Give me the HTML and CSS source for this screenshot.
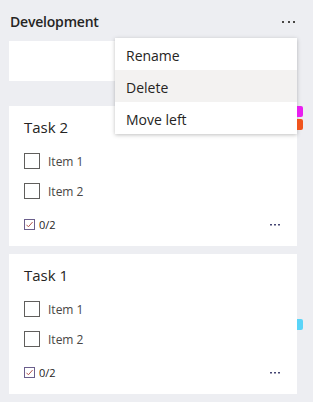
FILE: index.html
```html
<!DOCTYPE html>
<html lang="en">
<head>
    <meta charset="UTF-8">
    <meta name="viewport" content="width=device-width, initial-scale=1.0">
    <title>Board</title>
    <link rel="stylesheet" href="styles.css">
</head>
<body>

    <div class="column">
        <div class="column-header">
            <h2 class="column-title">Development</h2>
            <svg class="more" width="14" height="3" viewBox="0 0 14 3"><rect x="0" y="0" width="2" height="2" fill="#484644"/><rect x="6" y="0" width="2" height="2" fill="#484644"/><rect x="11" y="0" width="2" height="2" fill="#484644"/></svg>
        </div>

        <div class="card card-empty"></div>

        <div class="card task">
            <div class="task-title">Task 2</div>
            <div class="check-row"><span class="box"></span>Item 1</div>
            <div class="check-row"><span class="box"></span>Item 2</div>
            <div class="task-footer">
                <span class="progress">
                    <svg width="11" height="11" viewBox="0 0 11 11"><rect x="0.5" y="0.5" width="10" height="10" fill="none" stroke="#6b5f8c"/><path d="M2.5 5.8 L4.4 7.8 L8.6 3" fill="none" stroke="#b2554f" stroke-width="1"/></svg>
                    0/2
                </span>
                <svg class="more-small" width="11" height="2" viewBox="0 0 11 2"><rect x="0" y="0" width="2" height="1.5" fill="#464775"/><rect x="4" y="0" width="2" height="1.5" fill="#464775"/><rect x="8" y="0" width="2" height="1.5" fill="#464775"/></svg>
            </div>
        </div>

        <div class="card task">
            <div class="task-title">Task 1</div>
            <div class="check-row"><span class="box"></span>Item 1</div>
            <div class="check-row"><span class="box"></span>Item 2</div>
            <div class="task-footer">
                <span class="progress">
                    <svg width="11" height="11" viewBox="0 0 11 11"><rect x="0.5" y="0.5" width="10" height="10" fill="none" stroke="#6b5f8c"/><path d="M2.5 5.8 L4.4 7.8 L8.6 3" fill="none" stroke="#b2554f" stroke-width="1"/></svg>
                    0/2
                </span>
                <svg class="more-small" width="11" height="2" viewBox="0 0 11 2"><rect x="0" y="0" width="2" height="1.5" fill="#464775"/><rect x="4" y="0" width="2" height="1.5" fill="#464775"/><rect x="8" y="0" width="2" height="1.5" fill="#464775"/></svg>
            </div>
        </div>

        <!-- context menu + drag markers sit over the column -->
        <ul class="menu">
            <li>Rename</li>
            <li class="active">Delete</li>
            <li>Move left</li>
        </ul>
        <span class="marker magenta"></span>
        <span class="marker orange"></span>
        <span class="marker cyan"></span>
    </div>

</body>
</html>
```

FILE: styles.css
```css
*{
    padding: 0;
    margin: 0;
    box-sizing: border-box;
}

body {
    background-color: #edeef2;
    font-family: "Segoe UI", "Open Sans", sans-serif;
    color: #252423;
}

.column {
    position: relative;
    width: 313px;
    height: 402px;
    padding: 0 16px 0 9px;
}

.column-header {
    display: flex;
    justify-content: space-between;
    align-items: center;
    height: 41px;
    padding: 2px 1px 0 1px;
}

.column-title {
    font-size: 14px;
    font-weight: 600;
    letter-spacing: -0.2px;
}

.more {
    margin-top: 1px;
}

.card {
    background-color: #fff;
}

.card-empty {
    height: 40px;
    margin-bottom: 25px;
}

.task {
    padding: 11px 15px 9px 15px;
    margin-bottom: 8px;
}

.task-title {
    font-size: 15px;
    line-height: 20px;
    margin-bottom: 9px;
}

.check-row {
    display: flex;
    align-items: center;
    height: 30px;
    font-size: 12px;
    color: #484644;
}

.box {
    width: 16px;
    height: 16px;
    border: 1px solid #605e5c;
    margin-right: 8px;
}

.task-footer {
    display: flex;
    justify-content: space-between;
    align-items: center;
    height: 25px;
    margin-top: 6px;
    padding-right: 1px;
}

.progress {
    display: flex;
    align-items: center;
    gap: 4px;
    font-size: 11px;
    color: #252423;
}

.more-small {
    margin-right: 0;
}

.menu {
    position: absolute;
    left: 115px;
    top: 38px;
    width: 182px;
    list-style-type: none;
    background-color: #fff;
    box-shadow: 0 1px 4px rgba(0, 0, 0, 0.25);
    padding: 0;
}

.menu li {
    height: 32px;
    line-height: 32px;
    padding: 2px 0 0 11px;
    font-size: 14px;
}

.menu li.active {
    background-color: #f3f2f1;
}

.marker {
    position: absolute;
    left: 297px;
    width: 6px;
    border-radius: 0 2px 2px 0;
}

.magenta {
    top: 106px;
    height: 11px;
    background-color: #e81ef0;
}

.orange {
    top: 119px;
    height: 11px;
    background-color: #f0541e;
}

.cyan {
    top: 319px;
    height: 11px;
    background-color: #5ad4f8;
}
```
